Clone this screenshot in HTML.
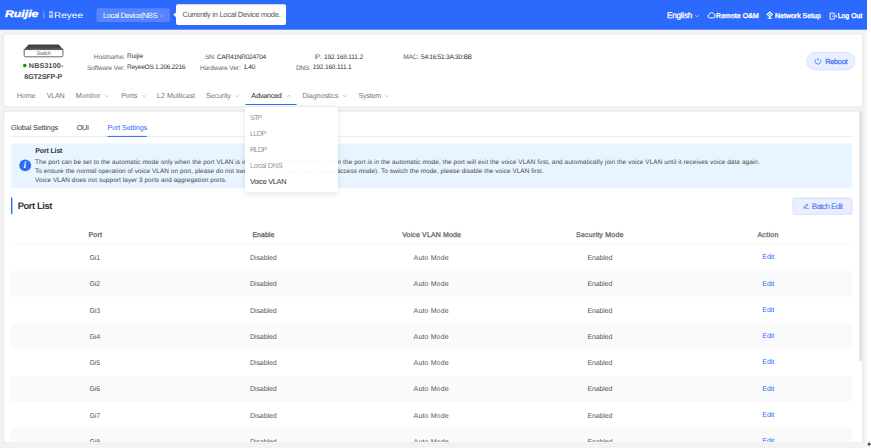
<!DOCTYPE html>
<html lang="en"><head><meta charset="utf-8"><title>Voice VLAN - Port Settings</title>
<style>
html,body{margin:0;padding:0}
body{width:871px;height:448px;overflow:hidden;background:#fff;position:relative;font-family:'Liberation Sans', sans-serif;text-rendering:geometricPrecision;}
.a{position:absolute;display:block}
.t{position:absolute;white-space:nowrap;line-height:10px;display:block}
#dd{left:245.3px;top:106.7px;width:92.9px;height:85.1px;background:rgba(255,255,255,0.955);border-radius:2px;box-shadow:0 1.5px 6px rgba(0,0,0,0.11)}
</style></head><body>
<svg class="a" style="left:0;top:0" width="871" height="448" viewBox="0 0 871 448">
<rect x="0.00" y="0.00" width="867.00" height="448.00" fill="#f3f3f3"/>
<rect x="0.00" y="0.00" width="867.00" height="29.70" fill="#2b6afd"/>
<rect x="96.50" y="8.20" width="73.50" height="13.80" fill="#5685fd" rx="1.5"/>
<rect x="43.40" y="11.40" width="0.90" height="6.90" fill="#94b3fe"/>
<rect x="176.00" y="4.20" width="110.00" height="20.80" fill="#fff" rx="2"/>
<path d="M176.3 12 L173.4 14.7 L176.3 17.4 Z" fill="#fff"/>
<rect x="3.00" y="33.50" width="860.30" height="74.00" fill="#e9e9e9" rx="3"/>
<rect x="4.10" y="34.60" width="858.10" height="71.80" fill="#fff" rx="2.2"/>
<rect x="3.00" y="110.60" width="860.30" height="332.90" fill="#e9e9e9" rx="3"/>
<rect x="4.10" y="111.70" width="858.10" height="330.70" fill="#fff" rx="2.2"/>
<rect x="859.10" y="111.40" width="3.00" height="249.90" fill="#dfe1e5" rx="1.5"/>
<rect x="245.50" y="104.00" width="51.00" height="1.00" fill="#2b6afd"/>
<rect x="11.00" y="136.00" width="841.00" height="0.70" fill="#e4e7ed"/>
<rect x="107.50" y="135.90" width="39.50" height="1.00" fill="#2b6afd"/>
<rect x="11.10" y="143.40" width="840.90" height="44.90" fill="#e8f4ff" rx="1.5"/>
<rect x="11.00" y="197.60" width="1.40" height="16.50" fill="#2b6afd"/>
<rect x="793.00" y="197.95" width="58.90" height="16.40" fill="#e9effe" rx="1.8" stroke="#b3c8fc" stroke-width="0.5"/>
<rect x="806.65" y="52.35" width="48.30" height="17.60" fill="#e9effe" rx="8.8" stroke="#bfd0fb" stroke-width="0.5"/>
<rect x="11.00" y="270.59" width="841.10" height="26.29" fill="#fafafa"/>
<rect x="11.00" y="323.17" width="841.10" height="26.29" fill="#fafafa"/>
<rect x="11.00" y="375.75" width="841.10" height="26.29" fill="#fafafa"/>
<rect x="11.00" y="428.33" width="841.10" height="14.07" fill="#fafafa"/>
<rect x="11.00" y="243.90" width="841.10" height="0.70" fill="#f0f2f7"/>
<circle cx="24.8" cy="65.6" r="1.8" fill="#0f9418"/>
<circle cx="25.2" cy="165.4" r="5.9" fill="#2b6afd"/>
</svg>

<!-- logo -->
<span class="t" style="left:4.8px;top:10.2px;font-size:9.6px;font-weight:700;font-style:italic;color:#fff;-webkit-text-stroke:0.38px #fff;transform-origin:0 50%;transform:scaleX(1.28)">Ruijie</span>

<div class="a" style="left:48.6px;top:11.4px;width:4.2px;height:6.6px;background:#a9c6ff;border-radius:0.8px"></div>
<div class="a" style="left:49.4px;top:12.6px;width:2.6px;height:2.4px;background:#5f8dfd"></div>
<span class="t" style="left:53.7px;top:10.2px;font-size:8.4px;color:#fff;transform-origin:0 50%;transform:scaleX(1.2)">Reyee</span>
<!-- cloud -->
<svg class="a" style="left:706.6px;top:11.4px" width="9" height="8" viewBox="0 0 9 8"><path d="M2.5 6.9 A1.75 1.75 0 0 1 2.3 3.45 A2.4 2.4 0 0 1 6.9 3.2 A1.9 1.9 0 0 1 6.6 6.9 Z" fill="none" stroke="#fff" stroke-width="1" stroke-linejoin="round"/></svg>
<!-- network -->
<svg class="a" style="left:766.4px;top:11.2px" width="7.6" height="8" viewBox="0 0 7.6 8"><path d="M3.8 0.9 L6.5 3.3 L3.8 5.7 L1.1 3.3 Z" fill="none" stroke="#fff" stroke-width="1.05" stroke-linejoin="round"/><circle cx="3.8" cy="3.3" r="0.9" fill="#fff"/><path d="M1.6 7.2 H6 M3.8 5.7 V7.2" fill="none" stroke="#fff" stroke-width="1"/></svg>
<!-- logout -->
<svg class="a" style="left:828.6px;top:11.5px" width="8.4" height="8" viewBox="0 0 8.4 8"><path d="M5.4 2.4 V1.1 H1.1 V7.1 H5.4 V5.8" fill="none" stroke="#fff" stroke-width="0.95" stroke-linejoin="round"/><path d="M3 4.1 H7.6 M6.1 2.6 L7.6 4.1 L6.1 5.6" fill="none" stroke="#fff" stroke-width="0.95" stroke-linejoin="round"/></svg>
<!-- switch device -->
<svg class="a" style="left:23px;top:44.2px" width="42" height="14" viewBox="0 0 42 14"><defs><linearGradient id="sg" x1="0" y1="0" x2="0" y2="1"><stop offset="0" stop-color="#3a3a3a"/><stop offset="1" stop-color="#5a5a5a"/></linearGradient></defs><path d="M5.6 0.8 H35.8 L40.2 5.8 H0.9 Z" fill="url(#sg)" stroke="#444" stroke-width="0.4" stroke-linejoin="round"/><path d="M1.2 5.6 H39.9 V11.6 Q39.9 12.8 38.7 12.8 H2.4 Q1.2 12.8 1.2 11.6 Z" fill="#fff" stroke="#444" stroke-width="0.8"/></svg>
<!-- power -->
<svg class="a" style="left:814.1px;top:57.4px" width="8" height="8" viewBox="0 0 8 8"><path d="M1.95 2.3 A2.85 2.85 0 1 0 6.05 2.3" fill="none" stroke="#3c6ef5" stroke-width="0.75"/><path d="M4 0.9 V3.9" stroke="#3c6ef5" stroke-width="0.75"/></svg>
<!-- edit -->
<svg class="a" style="left:802.6px;top:203px" width="6.4" height="6.4" viewBox="0 0 6.4 6.4"><path d="M1.1 4.0 L3.8 1.0 L5.0 2.1 L2.3 5.0 L0.9 5.3 Z" fill="none" stroke="#3f72f6" stroke-width="0.8" stroke-linejoin="round"/><path d="M3.3 5.8 H6" stroke="#3f72f6" stroke-width="0.8" stroke-linecap="round"/></svg>
<!-- info -->
<span class="t" style="left:23.5px;top:160.5px;font-size:9.8px;font-weight:700;font-style:italic;color:#fff;font-family:'Liberation Serif',serif">i</span>
<!-- cursor -->
<svg class="a" style="left:867.2px;top:441.4px" width="4" height="7" viewBox="0 0 4 7"><path d="M0.2 3.2 L2.6 0.6 V2.4 H4 V4.0 H2.6 V5.8 Z" fill="#555"/></svg>

<svg class="a" style="left:158.30px;top:11.80px" width="8" height="8" viewBox="-4 -4 8 8"><path d="M-1.9,-1.05 L0,1.05 L1.9,-1.05" fill="none" stroke="#a9c0fb" stroke-width="0.6" stroke-linecap="round" stroke-linejoin="round"/></svg><svg class="a" style="left:693.00px;top:11.60px" width="8" height="8" viewBox="-4 -4 8 8"><path d="M-1.8,-1.0 L0,1.0 L1.8,-1.0" fill="none" stroke="#e6edff" stroke-width="0.55" stroke-linecap="round" stroke-linejoin="round"/></svg><svg class="a" style="left:103.40px;top:91.50px" width="8" height="8" viewBox="-4 -4 8 8"><path d="M-1.8,-1.0 L0,1.0 L1.8,-1.0" fill="none" stroke="#b0b0b0" stroke-width="0.55" stroke-linecap="round" stroke-linejoin="round"/></svg><svg class="a" style="left:139.50px;top:91.50px" width="8" height="8" viewBox="-4 -4 8 8"><path d="M-1.8,-1.0 L0,1.0 L1.8,-1.0" fill="none" stroke="#b0b0b0" stroke-width="0.55" stroke-linecap="round" stroke-linejoin="round"/></svg><svg class="a" style="left:233.40px;top:91.50px" width="8" height="8" viewBox="-4 -4 8 8"><path d="M-1.8,-1.0 L0,1.0 L1.8,-1.0" fill="none" stroke="#b0b0b0" stroke-width="0.55" stroke-linecap="round" stroke-linejoin="round"/></svg><svg class="a" style="left:340.70px;top:91.50px" width="8" height="8" viewBox="-4 -4 8 8"><path d="M-1.8,-1.0 L0,1.0 L1.8,-1.0" fill="none" stroke="#b0b0b0" stroke-width="0.55" stroke-linecap="round" stroke-linejoin="round"/></svg><svg class="a" style="left:383.40px;top:91.50px" width="8" height="8" viewBox="-4 -4 8 8"><path d="M-1.8,-1.0 L0,1.0 L1.8,-1.0" fill="none" stroke="#b0b0b0" stroke-width="0.55" stroke-linecap="round" stroke-linejoin="round"/></svg><svg class="a" style="left:284.60px;top:91.60px" width="8" height="8" viewBox="-4 -4 8 8"><path d="M-1.6,0.9 L0,-0.9 L1.6,0.9" fill="none" stroke="#a8a8a8" stroke-width="0.55" stroke-linecap="round" stroke-linejoin="round"/></svg>
<div class="a" style="left:0;top:0;width:871px;height:442.4px;overflow:hidden">
<span class="t" style="left:103.00px;top:11.00px;font-size:7.6px;color:#fff;letter-spacing:-0.477px;">Local Device(NBS</span>
<span class="t" style="left:182.50px;top:9.60px;font-size:7.5px;color:#555;letter-spacing:-0.268px;">Currently in Local Device mode.</span>
<span class="t" style="left:667.00px;top:10.80px;font-size:8.2px;color:#fff;letter-spacing:-0.266px;-webkit-text-stroke:0.25px #fff;">English</span>
<span class="t" style="left:716.10px;top:11.55px;font-size:6.9px;color:#fff;letter-spacing:0.095px;-webkit-text-stroke:0.35px #fff;">Remote O&amp;M</span>
<span class="t" style="left:775.00px;top:11.55px;font-size:6.9px;color:#fff;letter-spacing:0.054px;-webkit-text-stroke:0.35px #fff;">Network Setup</span>
<span class="t" style="left:837.70px;top:11.55px;font-size:6.9px;color:#fff;letter-spacing:0.010px;-webkit-text-stroke:0.35px #fff;">Log Out</span>
<span class="t" style="left:36.80px;top:48.90px;font-size:5.2px;color:#555;letter-spacing:-0.247px;">Switch</span>
<span class="t" style="left:28.80px;top:60.95px;font-size:7.1px;color:#484848;letter-spacing:0.209px;font-weight:700;">NBS3100-</span>
<span class="t" style="left:24.30px;top:72.40px;font-size:7.1px;color:#484848;letter-spacing:-0.082px;font-weight:700;">8GT2SFP-P</span>
<span class="t" style="left:93.80px;top:53.20px;font-size:6.6px;color:#666;letter-spacing:-0.099px;">Hostname:</span>
<span class="t" style="left:127.00px;top:51.50px;font-size:6.6px;color:#333;letter-spacing:-0.083px;">Ruijie</span>
<span class="t" style="left:86.90px;top:63.80px;font-size:6.6px;color:#666;letter-spacing:-0.130px;">Software Ver:</span>
<span class="t" style="left:127.00px;top:63.45px;font-size:6.6px;color:#333;letter-spacing:-0.290px;">ReyeeOS 1.206.2216</span>
<span class="t" style="left:205.00px;top:53.20px;font-size:6.6px;color:#666;letter-spacing:-0.333px;">SN:</span>
<span class="t" style="left:217.00px;top:53.20px;font-size:6.6px;color:#333;letter-spacing:-0.292px;">CAR41NR024704</span>
<span class="t" style="left:199.90px;top:63.80px;font-size:6.6px;color:#666;letter-spacing:-0.104px;">Hardware Ver:</span>
<span class="t" style="left:243.50px;top:63.45px;font-size:6.6px;color:#333;letter-spacing:-0.336px;">1.40</span>
<span class="t" style="left:314.40px;top:53.20px;font-size:6.6px;color:#666;letter-spacing:-0.387px;">IP:</span>
<span class="t" style="left:324.00px;top:53.20px;font-size:6.6px;color:#333;letter-spacing:-0.168px;">192.168.111.2</span>
<span class="t" style="left:296.00px;top:63.80px;font-size:6.6px;color:#666;letter-spacing:-0.441px;">DNS:</span>
<span class="t" style="left:312.80px;top:63.45px;font-size:6.6px;color:#333;letter-spacing:-0.184px;">192.168.111.1</span>
<span class="t" style="left:403.30px;top:53.20px;font-size:6.6px;color:#666;letter-spacing:-0.321px;">MAC:</span>
<span class="t" style="left:421.00px;top:53.20px;font-size:6.6px;color:#333;letter-spacing:-0.274px;">54:16:51:3A:30:BB</span>
<span class="t" style="left:825.20px;top:57.30px;font-size:7.4px;color:#3c6ef5;letter-spacing:-0.291px;-webkit-text-stroke:0.2px #3c6ef5;">Reboot</span>
<span class="t" style="left:16.70px;top:90.75px;font-size:7.2px;color:#777;letter-spacing:-0.122px;">Home</span>
<span class="t" style="left:46.70px;top:90.75px;font-size:7.2px;color:#777;letter-spacing:-0.270px;">VLAN</span>
<span class="t" style="left:75.80px;top:90.75px;font-size:7.2px;color:#777;letter-spacing:0.104px;">Monitor</span>
<span class="t" style="left:121.20px;top:90.75px;font-size:7.2px;color:#777;letter-spacing:-0.156px;">Ports</span>
<span class="t" style="left:157.10px;top:90.75px;font-size:7.2px;color:#777;letter-spacing:-0.038px;">L2 Multicast</span>
<span class="t" style="left:206.00px;top:90.75px;font-size:7.2px;color:#777;letter-spacing:-0.146px;">Security</span>
<span class="t" style="left:251.30px;top:90.75px;font-size:7.2px;color:#1a1a1a;letter-spacing:-0.209px;">Advanced</span>
<span class="t" style="left:302.30px;top:90.75px;font-size:7.2px;color:#777;letter-spacing:-0.114px;">Diagnostics</span>
<span class="t" style="left:358.40px;top:90.75px;font-size:7.2px;color:#777;letter-spacing:-0.245px;">System</span>
<span class="t" style="left:11.00px;top:123.20px;font-size:7.2px;color:#303133;letter-spacing:-0.110px;">Global Settings</span>
<span class="t" style="left:76.70px;top:123.20px;font-size:7.2px;color:#303133;letter-spacing:-0.194px;">OUI</span>
<span class="t" style="left:107.50px;top:123.20px;font-size:7.2px;color:#2b6afd;letter-spacing:-0.127px;">Port Settings</span>
<span class="t" style="left:35.30px;top:146.90px;font-size:7.0px;color:#333;letter-spacing:-0.155px;font-weight:700;">Port List</span>
<span class="t" style="left:35.00px;top:157.50px;font-size:6.4px;color:#454545;letter-spacing:0.091px;">The port can be set to the automatic mode only when the port VLAN is in the trunk or hybrid mode. When the port is in the automatic mode, the port will exit the voice VLAN first, and automatically join the voice VLAN until it receives voice data again.</span>
<span class="t" style="left:35.00px;top:167.45px;font-size:6.4px;color:#454545;letter-spacing:0.073px;">To ensure the normal operation of voice VLAN on port, please do not switch the port mode (hybrid/trunk/access mode). To switch the mode, please disable the voice VLAN first.</span>
<span class="t" style="left:35.00px;top:175.60px;font-size:6.4px;color:#454545;letter-spacing:0.088px;">Voice VLAN does not support layer 3 ports and aggregation ports.</span>
<span class="t" style="left:17.70px;top:201.20px;font-size:9.4px;color:#333;letter-spacing:-0.403px;font-weight:700;">Port List</span>
<span class="t" style="left:811.70px;top:201.95px;font-size:8.0px;color:#386df6;letter-spacing:-0.567px;">Batch Edit</span>
<span class="t" style="left:88.40px;top:231.25px;font-size:7px;color:#666;letter-spacing:0.239px;-webkit-text-stroke:0.28px #666;">Port</span>
<span class="t" style="left:252.40px;top:231.25px;font-size:7px;color:#666;letter-spacing:0.034px;-webkit-text-stroke:0.28px #666;">Enable</span>
<span class="t" style="left:402.20px;top:231.25px;font-size:7px;color:#666;letter-spacing:0.139px;-webkit-text-stroke:0.28px #666;">Voice VLAN Mode</span>
<span class="t" style="left:576.10px;top:231.25px;font-size:7px;color:#666;letter-spacing:0.212px;-webkit-text-stroke:0.28px #666;">Security Mode</span>
<span class="t" style="left:757.40px;top:231.25px;font-size:7px;color:#666;letter-spacing:0.305px;-webkit-text-stroke:0.28px #666;">Action</span>
<span class="t" style="left:89.50px;top:253.55px;font-size:7px;color:#585858;letter-spacing:-0.169px;">Gi1</span>
<span class="t" style="left:250.00px;top:253.55px;font-size:7px;color:#585858;letter-spacing:-0.094px;">Disabled</span>
<span class="t" style="left:413.60px;top:253.55px;font-size:7px;color:#585858;letter-spacing:0.138px;">Auto Mode</span>
<span class="t" style="left:587.50px;top:253.55px;font-size:7px;color:#585858;letter-spacing:-0.143px;">Enabled</span>
<span class="t" style="left:762.30px;top:252.95px;font-size:7px;color:#2b6afd;letter-spacing:-0.066px;">Edit</span>
<span class="t" style="left:89.50px;top:279.84px;font-size:7px;color:#585858;letter-spacing:-0.169px;">Gi2</span>
<span class="t" style="left:250.00px;top:279.84px;font-size:7px;color:#585858;letter-spacing:-0.094px;">Disabled</span>
<span class="t" style="left:413.60px;top:279.84px;font-size:7px;color:#585858;letter-spacing:0.138px;">Auto Mode</span>
<span class="t" style="left:587.50px;top:279.84px;font-size:7px;color:#585858;letter-spacing:-0.143px;">Enabled</span>
<span class="t" style="left:762.30px;top:280.24px;font-size:7px;color:#2b6afd;letter-spacing:-0.066px;">Edit</span>
<span class="t" style="left:89.50px;top:307.13px;font-size:7px;color:#585858;letter-spacing:-0.169px;">Gi3</span>
<span class="t" style="left:250.00px;top:307.13px;font-size:7px;color:#585858;letter-spacing:-0.094px;">Disabled</span>
<span class="t" style="left:413.60px;top:307.13px;font-size:7px;color:#585858;letter-spacing:0.138px;">Auto Mode</span>
<span class="t" style="left:587.50px;top:307.13px;font-size:7px;color:#585858;letter-spacing:-0.143px;">Enabled</span>
<span class="t" style="left:762.30px;top:305.53px;font-size:7px;color:#2b6afd;letter-spacing:-0.066px;">Edit</span>
<span class="t" style="left:89.50px;top:333.42px;font-size:7px;color:#585858;letter-spacing:-0.169px;">Gi4</span>
<span class="t" style="left:250.00px;top:333.42px;font-size:7px;color:#585858;letter-spacing:-0.094px;">Disabled</span>
<span class="t" style="left:413.60px;top:333.42px;font-size:7px;color:#585858;letter-spacing:0.138px;">Auto Mode</span>
<span class="t" style="left:587.50px;top:333.42px;font-size:7px;color:#585858;letter-spacing:-0.143px;">Enabled</span>
<span class="t" style="left:762.30px;top:331.82px;font-size:7px;color:#2b6afd;letter-spacing:-0.066px;">Edit</span>
<span class="t" style="left:89.50px;top:358.71px;font-size:7px;color:#585858;letter-spacing:-0.169px;">Gi5</span>
<span class="t" style="left:250.00px;top:358.71px;font-size:7px;color:#585858;letter-spacing:-0.094px;">Disabled</span>
<span class="t" style="left:413.60px;top:358.71px;font-size:7px;color:#585858;letter-spacing:0.138px;">Auto Mode</span>
<span class="t" style="left:587.50px;top:358.71px;font-size:7px;color:#585858;letter-spacing:-0.143px;">Enabled</span>
<span class="t" style="left:762.30px;top:358.11px;font-size:7px;color:#2b6afd;letter-spacing:-0.066px;">Edit</span>
<span class="t" style="left:89.50px;top:385.00px;font-size:7px;color:#585858;letter-spacing:-0.169px;">Gi6</span>
<span class="t" style="left:250.00px;top:385.00px;font-size:7px;color:#585858;letter-spacing:-0.094px;">Disabled</span>
<span class="t" style="left:413.60px;top:385.00px;font-size:7px;color:#585858;letter-spacing:0.138px;">Auto Mode</span>
<span class="t" style="left:587.50px;top:385.00px;font-size:7px;color:#585858;letter-spacing:-0.143px;">Enabled</span>
<span class="t" style="left:762.30px;top:385.40px;font-size:7px;color:#2b6afd;letter-spacing:-0.066px;">Edit</span>
<span class="t" style="left:89.50px;top:412.29px;font-size:7px;color:#585858;letter-spacing:-0.169px;">Gi7</span>
<span class="t" style="left:250.00px;top:412.29px;font-size:7px;color:#585858;letter-spacing:-0.094px;">Disabled</span>
<span class="t" style="left:413.60px;top:412.29px;font-size:7px;color:#585858;letter-spacing:0.138px;">Auto Mode</span>
<span class="t" style="left:587.50px;top:412.29px;font-size:7px;color:#585858;letter-spacing:-0.143px;">Enabled</span>
<span class="t" style="left:762.30px;top:410.69px;font-size:7px;color:#2b6afd;letter-spacing:-0.066px;">Edit</span>
<span class="t" style="left:89.50px;top:437.58px;font-size:7px;color:#585858;letter-spacing:-0.169px;">Gi8</span>
<span class="t" style="left:250.00px;top:437.58px;font-size:7px;color:#585858;letter-spacing:-0.094px;">Disabled</span>
<span class="t" style="left:413.60px;top:437.58px;font-size:7px;color:#585858;letter-spacing:0.138px;">Auto Mode</span>
<span class="t" style="left:587.50px;top:437.58px;font-size:7px;color:#585858;letter-spacing:-0.143px;">Enabled</span>
<span class="t" style="left:762.30px;top:436.98px;font-size:7px;color:#2b6afd;letter-spacing:-0.066px;">Edit</span>
</div>
<div id="dd" class="a"></div>
<span class="t" style="left:250.10px;top:113.20px;font-size:7.4px;color:#999;letter-spacing:-1.092px;">STP</span>
<span class="t" style="left:250.10px;top:128.50px;font-size:7.4px;color:#999;letter-spacing:-0.725px;">LLDP</span>
<span class="t" style="left:250.10px;top:145.10px;font-size:7.4px;color:#999;letter-spacing:-0.855px;">RLDP</span>
<span class="t" style="left:250.10px;top:161.40px;font-size:7.4px;color:#999;letter-spacing:-0.336px;">Local DNS</span>
<span class="t" style="left:250.10px;top:177.40px;font-size:7.4px;color:#333;letter-spacing:-0.335px;">Voice VLAN</span>
</body></html>
